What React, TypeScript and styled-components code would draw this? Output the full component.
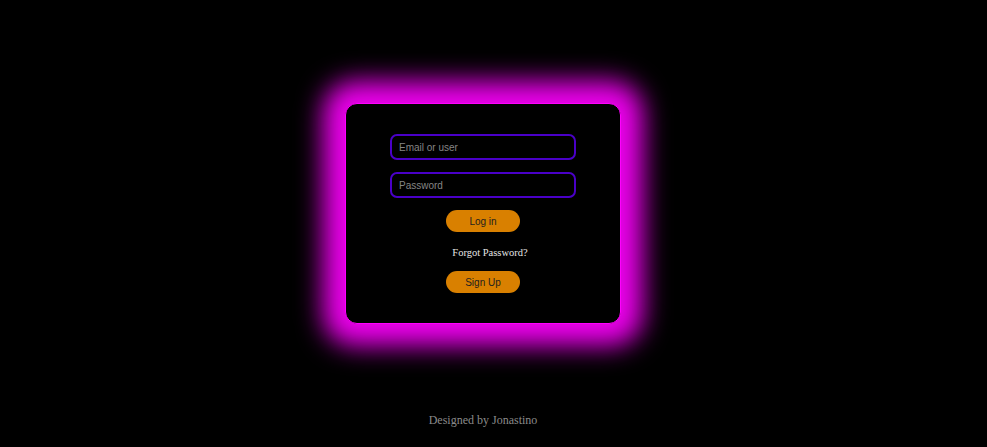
import React from "react";
import styled, { createGlobalStyle } from "styled-components";

const Global = createGlobalStyle`
  html, body {
    margin: 0;
    padding: 0;
    background: #000;
  }
  body {
    font-family: "Liberation Serif", "Times New Roman", serif;
  }
`;

const Page = styled.div`
  min-height: 447px;
  box-sizing: border-box;
  padding: 103px 21px 0 0;
  display: flex;
  flex-direction: column;
  align-items: center;
`;

const Card = styled.form`
  width: 276px;
  height: 221px;
  box-sizing: border-box;
  padding: 30px 0;
  background: #000;
  border: 1px solid #ff00ff;
  border-radius: 12px;
  box-shadow: 0 0 26px 22px #ea00ea;
  display: flex;
  flex-direction: column;
  align-items: center;
  gap: 12px;
`;

const Input = styled.input`
  width: 186px;
  height: 26px;
  box-sizing: border-box;
  background: #000;
  border: 2px solid #4a00c8;
  border-radius: 7px;
  padding: 0 7px;
  font-family: "Liberation Sans", Arial, sans-serif;
  font-size: 10px;
  color: #ccc;
  outline: none;
  &::placeholder {
    color: #858585;
  }
`;

const Button = styled.button`
  width: 74px;
  height: 22px;
  border: none;
  border-radius: 11px;
  background: #d98000;
  color: #1e1e1e;
  font-family: "Liberation Sans", Arial, sans-serif;
  font-size: 10px;
  padding: 0;
  cursor: pointer;
`;

const Forgot = styled.a`
  display: block;
  height: 15px;
  line-height: 15px;
  font-size: 10.5px;
  color: #e6e6e6;
  text-decoration: none;
  margin: 1px 0 -1px 14px;
`;

const Footer = styled.p`
  margin: 89px 0 0;
  font-size: 12px;
  line-height: 14px;
  color: #8a8a8a;
`;

export default function App() {
  return (
    <>
      <Global />
      <Page>
        <Card onSubmit={(e) => e.preventDefault()}>
          <Input type="text" placeholder="Email or user" />
          <Input type="password" placeholder="Password" />
          <Button type="submit">Log in</Button>
          <Forgot href="#">Forgot Password?</Forgot>
          <Button type="button">Sign Up</Button>
        </Card>
        <Footer>Designed by Jonastino</Footer>
      </Page>
    </>
  );
}
